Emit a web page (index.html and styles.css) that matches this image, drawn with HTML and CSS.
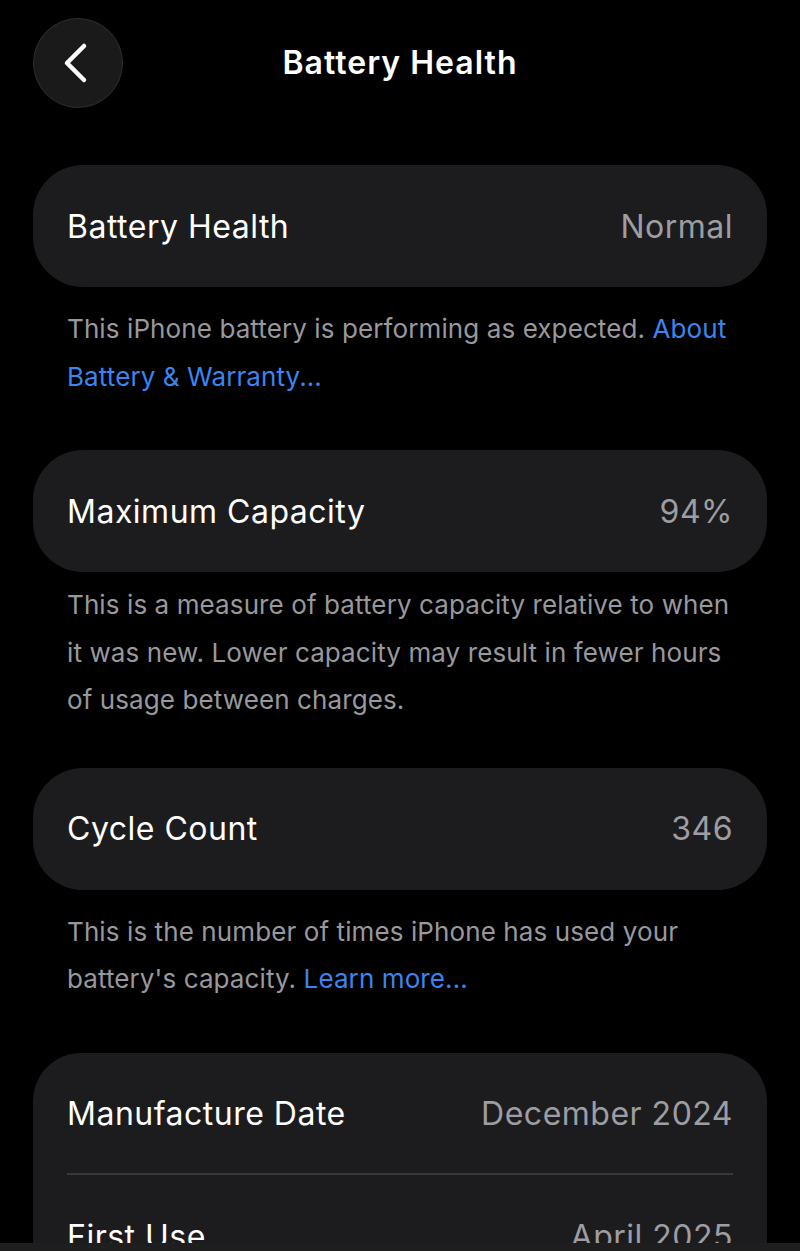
FILE: index.html
```html
<!DOCTYPE html>
<html lang="en">
<head>
<meta charset="utf-8">
<title>Battery Health</title>
<link rel="stylesheet" href="styles.css">
</head>
<body>
<header class="nav">
  <button class="back" aria-label="Back">
    <svg width="28" height="44" viewBox="0 0 28 44" fill="none">
      <path d="M22 5 L5 22 L22 39" stroke="#ffffff" stroke-width="4.5" stroke-linecap="round" stroke-linejoin="round"/>
    </svg>
  </button>
  <h1 class="title">Battery Health</h1>
  <div class="nav-spacer"></div>
</header>

<main class="content">
  <section class="card">
    <div class="row">
      <span class="label">Battery Health</span>
      <span class="value">Normal</span>
    </div>
  </section>
  <p class="footnote">This iPhone battery is performing as expected. <a class="link" href="#">About Battery &amp; Warranty...</a></p>

  <section class="card">
    <div class="row">
      <span class="label">Maximum Capacity</span>
      <span class="value">94%</span>
    </div>
  </section>
  <p class="footnote footnote-tight">This is a measure of battery capacity relative to when it was new. Lower capacity may result in fewer hours of usage between charges.</p>

  <section class="card">
    <div class="row">
      <span class="label">Cycle Count</span>
      <span class="value">346</span>
    </div>
  </section>
  <p class="footnote">This is the number of times iPhone has used your battery's capacity. <a class="link" href="#">Learn more...</a></p>

  <section class="card card-group">
    <div class="row row-divided">
      <span class="label">Manufacture Date</span>
      <span class="value">December 2024</span>
    </div>
    <div class="row">
      <span class="label">First Use</span>
      <span class="value">April 2025</span>
    </div>
  </section>
</main>

<div class="bottom-bar"></div>
</body>
</html>
```

FILE: styles.css
```css
* {
  box-sizing: border-box;
}

html, body {
  margin: 0;
  padding: 0;
  background: #000000;
}

body {
  font-family: Inter, "Noto Sans", "Liberation Sans", sans-serif;
  color: #ffffff;
  -webkit-font-smoothing: antialiased;
}

.nav {
  display: grid;
  grid-template-columns: 1fr auto 1fr;
  align-items: center;
  padding: 17px 33px 0 33px;
  height: 108px;
}

.back {
  width: 90px;
  height: 90px;
  border-radius: 50%;
  background: #1a1a1b;
  border: 1.5px solid #2e2e30;
  display: flex;
  align-items: center;
  justify-content: center;
  padding: 0 4px 0 0;
  cursor: pointer;
}

.title {
  margin: 0;
  font-size: 32px;
  font-weight: 600;
  letter-spacing: 1px;
  color: #ffffff;
  text-align: center;
}

.content {
  padding: 57px 33px 0 33px;
}

.card {
  background: #1c1c1e;
  border-radius: 50px;
}

.row {
  height: 122px;
  display: flex;
  align-items: center;
  justify-content: space-between;
  padding: 0 34px;
  font-size: 32px;
  letter-spacing: 0.5px;
}

.label {
  color: #ffffff;
}

.value {
  color: #9d9da2;
}

.card-group {
  border-radius: 48px 48px 0 0;
}

.card-group .row {
  padding: 2px 0 0 0;
  margin: 0 34px;
}

.row-divided {
  border-bottom: 2px solid #38383a;
}

.footnote {
  margin: 18px 0 50px 0;
  padding: 0 34px;
  font-size: 26px;
  line-height: 47.5px;
  letter-spacing: 0.1px;
  color: #98989d;
}

.footnote-tight {
  margin-top: 9px;
  margin-bottom: 44px;
}

.link {
  color: #3a85f2;
  text-decoration: none;
}

.bottom-bar {
  position: fixed;
  left: 0;
  right: 0;
  bottom: 0;
  height: 8px;
  background: #1e1e1f;
}
```
